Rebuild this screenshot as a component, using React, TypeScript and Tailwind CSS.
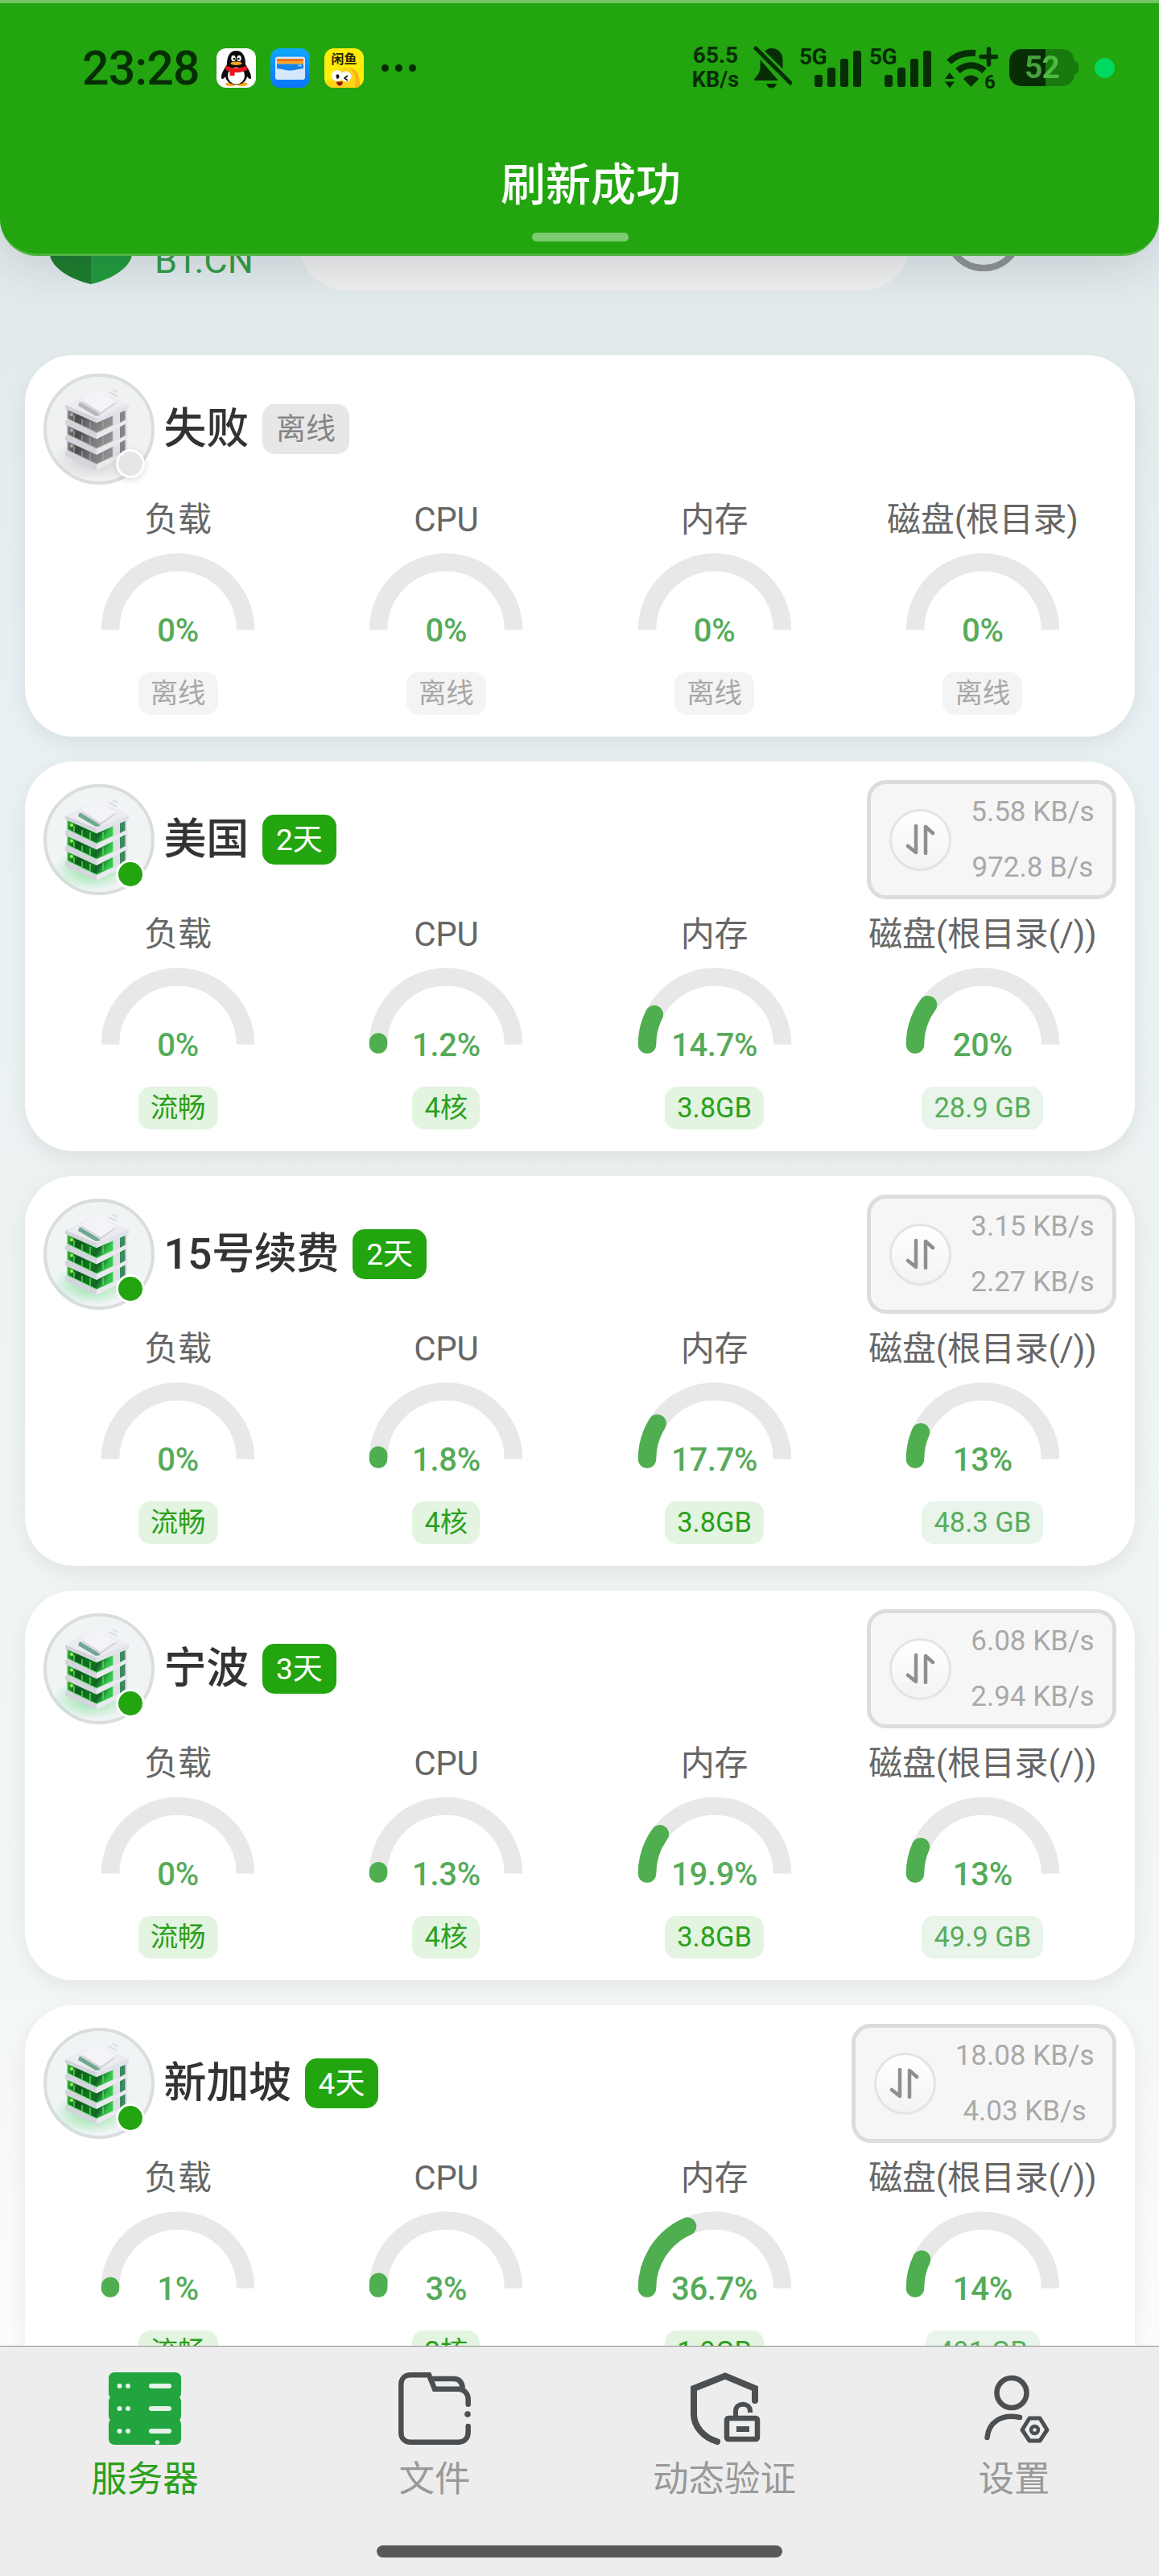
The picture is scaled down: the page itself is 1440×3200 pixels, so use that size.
import { useState } from "react"

type Metric = {
  label: string
  value: number
  chip: string
  disk?: boolean
}

type Server = {
  name: string
  badge: string
  online: boolean
  up?: string
  down?: string
  metrics: Metric[]
}

const offline = (label: string): Metric => ({ label, value: 0, chip: "离线" })

const servers: Server[] = [
  {
    name: "失败",
    badge: "离线",
    online: false,
    metrics: [offline("负载"), offline("CPU"), offline("内存"), offline("磁盘(根目录)")],
  },
  {
    name: "美国",
    badge: "2天",
    online: true,
    up: "5.58 KB/s",
    down: "972.8 B/s",
    metrics: [
      { label: "负载", value: 0, chip: "流畅" },
      { label: "CPU", value: 1.2, chip: "4核" },
      { label: "内存", value: 14.7, chip: "3.8GB" },
      { label: "磁盘(根目录(/))", value: 20, chip: "28.9 GB", disk: true },
    ],
  },
  {
    name: "15号续费",
    badge: "2天",
    online: true,
    up: "3.15 KB/s",
    down: "2.27 KB/s",
    metrics: [
      { label: "负载", value: 0, chip: "流畅" },
      { label: "CPU", value: 1.8, chip: "4核" },
      { label: "内存", value: 17.7, chip: "3.8GB" },
      { label: "磁盘(根目录(/))", value: 13, chip: "48.3 GB", disk: true },
    ],
  },
  {
    name: "宁波",
    badge: "3天",
    online: true,
    up: "6.08 KB/s",
    down: "2.94 KB/s",
    metrics: [
      { label: "负载", value: 0, chip: "流畅" },
      { label: "CPU", value: 1.3, chip: "4核" },
      { label: "内存", value: 19.9, chip: "3.8GB" },
      { label: "磁盘(根目录(/))", value: 13, chip: "49.9 GB", disk: true },
    ],
  },
  {
    name: "新加坡",
    badge: "4天",
    online: true,
    up: "18.08 KB/s",
    down: "4.03 KB/s",
    metrics: [
      { label: "负载", value: 1, chip: "流畅" },
      { label: "CPU", value: 3, chip: "2核" },
      { label: "内存", value: 36.7, chip: "1.9GB" },
      { label: "磁盘(根目录(/))", value: 14, chip: "491 GB", disk: true },
    ],
  },
]

function QQIcon() {
  return (
    <svg viewBox="0 0 49 49" className="size-[49px]">
      <rect width="49" height="49" rx="12" fill="#fff" />
      <ellipse cx="18" cy="44.5" rx="7" ry="2.6" fill="#f9a51a" />
      <ellipse cx="31.5" cy="44.5" rx="7" ry="2.6" fill="#f9a51a" />
      <path d="M13 20C13 9 17 3 24.5 3S36 9 36 20c3 5 7 11 7 16 0 3-2 3-5-1-1 6-6 10-13.5 10S12 41 11 35c-3 4-5 4-5 1 0-5 4-11 7-16Z" fill="#0b0b0b" />
      <ellipse cx="24.5" cy="34" rx="10.5" ry="10.5" fill="#fff" />
      <path d="M11.5 21.5c8 4 18 4 26 0l1 5c-5 3-10 3.5-16 3.5v4h-6v-5l-5-2Z" fill="#e8141c" />
      <ellipse cx="21" cy="12.5" rx="2.7" ry="3.8" fill="#fff" />
      <ellipse cx="28" cy="12.5" rx="2.7" ry="3.8" fill="#fff" />
      <circle cx="21.8" cy="13" r="1.3" />
      <circle cx="27.4" cy="13" r="1.3" />
      <ellipse cx="24.5" cy="18.7" rx="7" ry="2.3" fill="#f9a51a" />
    </svg>
  )
}

function WalletIcon() {
  return (
    <svg viewBox="0 0 49 49" className="size-[49px]">
      <defs>
        <linearGradient id="wallet" x1="0" y1="0" x2="0" y2="1">
          <stop offset="0" stopColor="#10a8ff" />
          <stop offset="1" stopColor="#0a74fb" />
        </linearGradient>
      </defs>
      <rect width="49" height="49" rx="12" fill="url(#wallet)" />
      <rect x="6" y="10.5" width="37" height="28.5" rx="3" fill="#d4e7fb" />
      <rect x="8" y="13" width="33" height="4" fill="#f0701f" />
      <rect x="8" y="16" width="33" height="3.5" fill="#ffa51f" />
      <path d="M8 19.5h33V25l-9 1.5c-4 1.5-11 1.5-15 0L8 25Z" fill="#1683ec" />
      <path d="M34.5 21.5h4" stroke="#cfe6ff" strokeWidth="1.8" strokeDasharray="1.6 .6" />
    </svg>
  )
}

function FishIcon() {
  return (
    <div className="relative size-[49px] overflow-hidden rounded-xl bg-[#ffec0b]">
      <svg viewBox="0 0 49 49" className="absolute inset-0">
        <path d="M4 49c-3-4-2-8 1-9l4 1c1-12 10-18 20-17 9 1 14 7 14 14v11Z" fill="#ffd21a" />
        <path d="M31 24c9 2 14 9 13 25h-6c2-11 1-18-7-25Z" fill="#fbb312" />
        <circle cx="16" cy="34" r="7" fill="#fff" />
        <circle cx="27" cy="35" r="6.5" fill="#fff" />
        <ellipse cx="16.5" cy="35" rx="2" ry="2.8" fill="#141414" />
        <path d="m29 34-4 3 4 3" fill="none" stroke="#141414" strokeWidth="1.6" />
        <path d="M15 41.5h8c0 3-2 5-4 5s-4-2-4-5Z" fill="#96150c" />
      </svg>
      <span className="absolute inset-x-0 top-[4px] text-center text-[16px] leading-[20px] font-bold text-[#2b2400]">闲鱼</span>
    </div>
  )
}

function BellOff() {
  return (
    <svg viewBox="0 0 48 54" className="ml-[17px] h-[54px] w-[48px]" fill="#072d05">
      <path d="M14 6.5C17 4 19 3 22 3c9 0 14.5 6 14.5 14v11.5Z" />
      <path d="M8.5 17v9c0 7-3 10-7.5 15.5 0 1 .5 1.5 1.5 1.5H31Z" />
      <path d="M16 47h13c-1 3.5-3.5 5.5-6.5 5.5S17 50.5 16 47Z" />
      <path d="M3 3l43 43" stroke="#072d05" strokeWidth="5" strokeLinecap="round" />
    </svg>
  )
}

function Signal() {
  return (
    <div className="ml-[9px] flex h-[54px] w-[78px]">
      <span className="h-6 w-[19px] text-[28px] leading-[28px] font-bold tracking-[-0.5px]">5G</span>
      <div className="flex items-end gap-[6px] pb-[3px]">
        <i className="h-[15px] w-[10px] rounded-[3px] bg-[#072d05]" />
        <i className="h-[24px] w-[10px] rounded-[3px] bg-[#072d05]" />
        <i className="h-[35px] w-[10px] rounded-[3px] bg-[#072d05]" />
        <i className="h-[45px] w-[10px] rounded-[3px] bg-[#072d05]" />
      </div>
    </div>
  )
}

function Wifi() {
  return (
    <svg viewBox="0 0 66 60" className="mt-[6px] ml-[16px] h-[60px] w-[66px]" fill="#072d05">
      <path d="M5 20C14 11 25 8 38 9" fill="none" stroke="#072d05" strokeWidth="8" />
      <path d="M16 31c10-9 23-9 33 0" fill="none" stroke="#072d05" strokeWidth="8" />
      <path d="M23 41c5-6 14-6 19 0l-9.5 10Z" />
      <path d="M0 41 6 33l6 8ZM0 44.5l6 8 6-8Z" />
      <path d="M54.5 4v19M45 13.5h19" stroke="#072d05" strokeWidth="5.5" strokeLinecap="round" />
      <text x="49" y="53" fontSize="24" fontWeight="700">6</text>
    </svg>
  )
}

function StatusBar() {
  return (
    <div className="flex h-[160px] items-center pl-[102px] text-[#072d05]">
      <span className="w-[151px] text-[59px] leading-none font-medium tracking-[-0.8px]">23:28</span>
      <div className="ml-4 flex gap-[18px]">
        <QQIcon />
        <WalletIcon />
        <FishIcon />
      </div>
      <div className="ml-[22px] flex gap-2">
        <i className="size-[9px] rounded-full bg-[#072d05]" />
        <i className="size-[9px] rounded-full bg-[#072d05]" />
        <i className="size-[9px] rounded-full bg-[#072d05]" />
      </div>
      <div className="ml-auto flex items-center">
        <div className="w-[60px] text-center text-[28px] leading-[31px] font-bold">
          <div>65.5</div>
          <div className="text-[27px]">KB/s</div>
        </div>
        <BellOff />
        <Signal />
        <Signal />
        <Wifi />
        <div className="ml-[14px] flex h-[46px] w-[81px] items-center justify-center rounded-[15px] bg-[linear-gradient(90deg,#072d05_55%,#187a0d_55%)] text-[39px] font-bold tracking-[-1px]">
          <span className="bg-[linear-gradient(90deg,#47a03a_50%,#4fba43_50%)] bg-clip-text leading-[46px] text-transparent">52</span>
        </div>
        <i className="h-4 w-[5px] rounded-r-full bg-[#187a0d]" />
        <i className="mr-[55px] ml-[20px] size-[25px] rounded-full bg-[#00d95f]" />
      </div>
    </div>
  )
}

function Toast() {
  return (
    <header className="relative z-10 h-[318px] shrink-0 rounded-b-[46px] border-t-4 border-b-[3px] border-t-[#74c666] border-b-[#4fb440] bg-[#22a50f] shadow-[0_4px_70px_rgba(40,60,70,0.22)]">
      <StatusBar />
      <div className="flex flex-col items-center">
        <div className="mt-[30px] pl-[28px] text-[56px] leading-[72px] font-medium text-white">刷新成功</div>
        <div className="mt-[23px] ml-[2px] h-[11px] w-[120px] rounded-full bg-[#7bcb70]" />
      </div>
    </header>
  )
}

function SearchRow() {
  return (
    <div className="-mt-[79px] flex h-[122px] shrink-0 pl-[62px]">
      <svg viewBox="0 0 102 114" className="h-[114px] w-[102px] shrink-0">
        <path d="M51 0 0 20v58c3 16 25 30 51 36Z" fill="#1c7d2c" />
        <path d="m51 0 51 20v58c-3 16-25 30-51 36Z" fill="#209b3b" />
      </svg>
      <div className="ml-[28px] w-[179px] shrink-0 pt-[59px] text-[45px] leading-[51px] text-[#2f9e45]">BT.CN</div>
      <div className="h-[122px] w-[760px] shrink-0 rounded-full bg-[#f0f0f0]" />
      <div className="ml-[42px] size-[98px] rounded-full border-8 border-[#8e9295]" />
    </div>
  )
}

function Tower({ online }: { online: boolean }) {
  const glass = online ? "url(#glassOn)" : "url(#glassOff)"
  const edge = online ? "#48d957" : "#b5b5b5"
  return (
    <svg viewBox="0 0 138 138" className="size-[138px]">
      <defs>
        <linearGradient id="glassOn" x1="0" y1="0" x2="1" y2="0.3">
          <stop offset="0" stopColor="#2fc32f" />
          <stop offset="0.3" stopColor="#0d5a1c" />
          <stop offset="0.65" stopColor="#0f7a20" />
          <stop offset="0.8" stopColor="#126328" />
          <stop offset="1" stopColor="#35c64b" />
        </linearGradient>
        <linearGradient id="glassOff" x1="0" y1="0" x2="1" y2="0.3">
          <stop offset="0" stopColor="#8c8c8c" />
          <stop offset="0.3" stopColor="#4b4b4b" />
          <stop offset="0.65" stopColor="#757575" />
          <stop offset="1" stopColor="#8f8f8f" />
        </linearGradient>
        <radialGradient id="glowOn">
          <stop offset="0" stopColor="#8be3a0" />
          <stop offset="1" stopColor="#8be3a0" stopOpacity="0" />
        </radialGradient>
        <radialGradient id="glowOff">
          <stop offset="0" stopColor="#c9c9c9" />
          <stop offset="1" stopColor="#c9c9c9" stopOpacity="0" />
        </radialGradient>
      </defs>
      <circle cx="69" cy="69" r="67" fill={online ? "#f0f4f5" : "#f0f2f2"} stroke="#dadddd" strokeWidth="4" />
      <ellipse cx="60" cy="106" rx="48" ry="26" fill={online ? "url(#glowOn)" : "url(#glowOff)"} />
      <path d="M29 42 66 60v58L29 100Z" fill="#d4d5db" />
      <path d="M66 60 104 40v60L66 118Z" fill="#dfe0e6" />
      {[0, 19.5, 39].map((y) => (
        <g key={y} transform={`translate(0 ${y})`}>
          <path d="m30 44 36 17 20-9v12l-20 9.5L30 56Z" fill={glass} stroke={edge} strokeWidth="1" />
          <path d="M38 52v7M48 57v7M58 60v9M74 59v9" stroke={online ? "#7be26a" : "#a5a5a5"} strokeWidth="1.2" />
          <circle cx="35" cy="51" r="2" fill={online ? "#a5f16a" : "#b0b0b0"} />
          <path d="m95 46.500 6.500-3.500v14.500L95 61Z" fill={online ? "#3b8a5f" : "#858585"} />
        </g>
      ))}
      {[19.5, 39, 58].map((y) => (
        <g key={y} transform={`translate(0 ${y})`}>
          <path d="m27 38 39 17v7L27 44Z" fill="#d3d4dc" />
          <path d="m66 55 40-18v4L66 62Z" fill="#e9e9ef" />
        </g>
      ))}
      <path d="M27 39 66 55v6L27 44Z" fill="#d3d4db" />
      <path d="m66 55 40-17v6L66 61Z" fill="#e2e3ea" />
      <path d="m27 39 38-18 41 17-40 17Z" fill="#ebebf1" />
      <path d="m45 35 23 14 3 3-6 1-22-13Z" fill={online ? "#6fa890" : "#b9b9b9"} />
      <path d="m47 35 18-14 25 16-19 14Z" fill="#d3d3da" />
      <path d="m47 33 18-14 25 16-19 13Z" fill="#f4f3f8" />
      <path d="m81 23 10 5m-5-8 6 3" stroke="#dcdde2" strokeWidth="2" />
    </svg>
  )
}

function Gauge({ value }: { value: number }) {
  return (
    <div className="relative mt-[11px] h-[96px] w-[192px]">
      <svg viewBox="0 0 192 108" className="h-[108px] w-[192px]" fill="none" strokeWidth="22.5">
        <path d="M12 95.5a84 84 0 0 1 168 0" stroke="#e8e8e8" />
        {value > 0 && (
          <path
            d="M12 95.5a84 84 0 0 1 168 0"
            stroke="#4fae50"
            strokeLinecap="round"
            pathLength={100}
            strokeDasharray={`${value} 200`}
          />
        )}
      </svg>
      <span className="absolute inset-x-0 -bottom-[25px] text-center text-[40px] leading-[48px] font-medium tracking-[-0.3px] text-[#56ab59]">
        {value}%
      </span>
    </div>
  )
}

function MetricColumn({ metric, online }: { metric: Metric; online: boolean }) {
  let chip = "bg-[#f4f4f4] text-[#a8a8a8]"
  if (online) chip = metric.disk ? "bg-[#e9f4eb] text-[#58ad5b]" : "bg-[#e3f4e1] text-[#2ba01b]"

  return (
    <div className="flex flex-col items-center">
      <div className="mt-[12px] mb-[-2px] text-[42px] leading-[64px] tracking-[-0.2px] whitespace-nowrap text-[#666]">
        {metric.label}
      </div>
      <Gauge value={metric.value} />
      <div className={`mt-[52px] h-[53px] rounded-[15px] px-[15px] text-[34.5px] leading-[53px] whitespace-nowrap ${chip}`}>
        {metric.chip}
      </div>
    </div>
  )
}

function Traffic({ up, down }: { up: string; down?: string }) {
  return (
    <div className="ml-auto flex h-[148px] items-center gap-[24px] rounded-[24px] border-[5px] border-[#dcdcdc] bg-[#f6f6f6] pr-[22px] pl-[23px]">
      <div className="flex size-[77px] items-center justify-center rounded-full border-[3px] border-[#e4e4e4] bg-linear-to-b from-white to-[#f3f3f3]">
        <svg viewBox="0 0 38 38" className="size-[38px]" fill="none" stroke="#8f8f8f" strokeWidth="4.5" strokeLinecap="round" strokeLinejoin="round">
          <path d="M13 2v33L3 27" />
          <path d="M25 36V3l9 8" />
        </svg>
      </div>
      <div className="text-center text-[35px] leading-[69px] text-[#a9a9a9]">
        <div>{up}</div>
        <div>{down}</div>
      </div>
    </div>
  )
}

function ServerCard({ server }: { server: Server }) {
  return (
    <section className="rounded-[60px] bg-white p-[23px] pb-[27px] shadow-[0_8px_26px_rgba(0,0,0,0.07)]">
      <div className="flex items-center">
        <div className="relative size-[138px]">
          <Tower online={server.online} />
          <i
            className={`absolute right-[12px] bottom-[8px] size-[36px] rounded-full border-[3px] border-white ${
              server.online ? "bg-[#22a50f]" : "bg-[#e6e6e6] shadow-[0_2px_10px_rgba(0,0,0,0.15)]"
            }`}
          />
        </div>
        <h2 className="ml-[12px] text-[53px] leading-[72px] font-medium tracking-[-0.3px] text-[#333]">{server.name}</h2>
        <div
          className={`ml-[17px] h-[62px] rounded-[15px] px-[17px] pt-px text-[37px] leading-[62px] ${
            server.online ? "bg-[#22a50f] text-white" : "bg-[#e7e7e7] text-[#858585]"
          }`}
        >
          {server.badge}
        </div>
        {server.up && <Traffic up={server.up} down={server.down} />}
      </div>
      <div className="grid grid-cols-4 pl-px -mr-px">
        {server.metrics.map((m) => (
          <MetricColumn key={m.label} metric={m} online={server.online} />
        ))}
      </div>
    </section>
  )
}

function ServerTab() {
  return (
    <svg viewBox="0 0 90 90" className="size-[90px]">
      <path d="M8 0h74q8 0 8 8v18q0 3-2 5 2 2 2 5v18q0 3-2 5 2 2 2 5v18q0 8-8 8H8q-8 0-8-8V64q0-3 2-5-2-2-2-5V36q0-3 2-5-2-2-2-5V8q0-8 8-8Z" fill="#22a53f" />
      {[17, 45, 73].map((y) => (
        <g key={y} fill="#e4f3e7">
          <circle cx="13.5" cy={y} r="3" />
          <circle cx="24" cy={y} r="3" />
          <rect x="50" y={y - 3} width="28" height="6" rx="3" />
        </g>
      ))}
      <circle cx="60.5" cy="87" r="2.8" fill="#e4f3e7" />
    </svg>
  )
}

function FileTab() {
  return (
    <svg viewBox="0 0 90 90" className="size-[90px]" fill="none" stroke="#4b4f52" strokeWidth="6.5">
      <path d="M86.700 67v7c0 8-5 12.700-12 12.700H15C8 86.700 3.300 82 3.300 75V15C3.300 8 8 3.300 15 3.300h23l7 17.500h29c8 0 12.700 6 12.700 13v6" strokeLinecap="round" />
      <path d="M40 8h29c6 0 10 4 11 12" />
      <circle cx="86" cy="52" r="3.8" fill="#4b4f52" stroke="none" />
    </svg>
  )
}

function ShieldTab() {
  return (
    <svg viewBox="0 0 90 90" className="size-[90px]" fill="none" stroke="#4b4f52" strokeWidth="8">
      <path d="M83 35V20L46 4.500 7 20v32c0 15 12 29 29 34" strokeLinecap="round" />
      <rect x="48" y="57" width="38" height="26" rx="2" strokeWidth="6.5" />
      <path d="M59 56v-8c0-11 18-11 18 0v2" strokeWidth="6" />
      <path d="M60 70.500h16" strokeWidth="7" />
    </svg>
  )
}

function UserTab() {
  return (
    <svg viewBox="0 0 90 90" className="size-[90px]" fill="none" stroke="#4b4f52" strokeWidth="6.5">
      <circle cx="42" cy="25.5" r="18.5" />
      <path d="M11.500 81C13 63 28 51 52 56" strokeLinecap="round" />
      <path d="M64 57h13l9 14.500-9 13.500H64l-9-13.500Z" strokeWidth="5" strokeLinejoin="round" />
      <circle cx="70.5" cy="71.5" r="4.5" strokeWidth="4.5" />
    </svg>
  )
}

const tabs = [
  { label: "服务器", Icon: ServerTab },
  { label: "文件", Icon: FileTab },
  { label: "动态验证", Icon: ShieldTab },
  { label: "设置", Icon: UserTab },
]

function TabBar() {
  const [active, setActive] = useState("服务器")

  return (
    <nav className="relative z-10 flex h-[286px] shrink-0 flex-col items-center border-t border-[#8d8d8d] bg-[#ededed]">
      <div className="grid w-full grid-cols-4 pt-[32px]">
        {tabs.map(({ label, Icon }) => (
          <button key={label} onClick={() => setActive(label)} className="flex flex-col items-center">
            <Icon />
            <span className={`mt-[13px] text-[44.5px] leading-[60px] ${active === label ? "text-[#2ba01b]" : "text-[#999]"}`}>
              {label}
            </span>
          </button>
        ))}
      </div>
      <div className="mt-auto mb-[23px] h-[15px] w-[504px] rounded-full bg-[#585858]" />
    </nav>
  )
}

export default function App() {
  return (
    <div className="flex h-[3200px] w-[1440px] flex-col overflow-hidden bg-[linear-gradient(180deg,#e2eaec_0%,#e3ebed_14%,#e8f0f3_28%,#ecf2f2_45%,#f3f6f6_75%,#fcfcfc_92%)] font-['Roboto','Noto_Sans_CJK_SC',sans-serif]">
      <Toast />
      <main className="flex min-h-0 flex-1 flex-col">
        <SearchRow />
        <div className="mt-[80px] flex flex-col gap-[31px] px-[30.500px]">
          {servers.map((s) => (
            <ServerCard key={s.name} server={s} />
          ))}
        </div>
      </main>
      <TabBar />
    </div>
  )
}
